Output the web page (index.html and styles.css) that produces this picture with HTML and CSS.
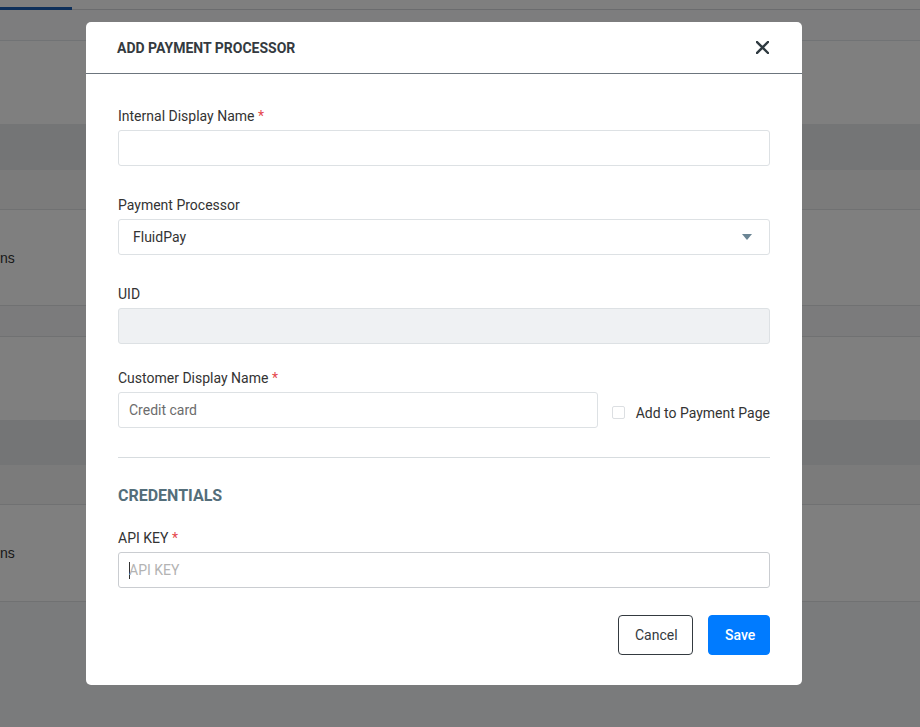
FILE: index.html
```html
<!DOCTYPE html>
<html lang="en">
<head>
<meta charset="utf-8">
<title>Add Payment Processor</title>
<link rel="stylesheet" href="styles.css">
</head>
<body>
<div class="page">
  <div class="topbar"><div class="tab-active"></div></div>
  <div class="subbar"></div>
  <div class="intro"></div>
  <div class="thead"></div>
  <div class="tfilter"></div>
  <div class="trow"><span class="cell-text">ns</span></div>
  <div class="tfoot"></div>
  <div class="gap-block"></div>
  <div class="thead thead-2"></div>
  <div class="tfilter"></div>
  <div class="trow trow-2"><span class="cell-text">ns</span></div>
  <div class="rest"></div>
</div>

<div class="backdrop">
  <div class="modal">
    <div class="modal-header">
      <h5 class="modal-title">ADD PAYMENT PROCESSOR</h5>
      <button class="close" type="button" aria-label="Close">
        <svg width="13" height="13" viewBox="0 0 13 13"><path d="M1 1 L12 12 M12 1 L1 12" stroke="#2f3a40" stroke-width="2.4" stroke-linecap="square" fill="none"/></svg>
      </button>
    </div>
    <div class="modal-body">
      <div class="group">
        <label class="label">Internal Display Name <span class="req">*</span></label>
        <div class="input"></div>
      </div>
      <div class="group">
        <label class="label">Payment Processor</label>
        <div class="input select"><span class="value">FluidPay</span><span class="caret"></span></div>
      </div>
      <div class="group group-tight">
        <label class="label">UID</label>
        <div class="input disabled"></div>
      </div>
      <div class="group">
        <label class="label">Customer Display Name <span class="req">*</span></label>
        <div class="row">
          <div class="input grow"><span class="muted">Credit card</span></div>
          <label class="check"><span class="box"></span><span>Add to Payment Page</span></label>
        </div>
      </div>
      <hr class="divider">
      <h6 class="section-title">CREDENTIALS</h6>
      <div class="group group-last">
        <label class="label">API KEY <span class="req">*</span></label>
        <div class="input focus"><span class="text-caret"></span><span class="placeholder">API KEY</span></div>
      </div>
      <div class="actions">
        <button class="btn btn-outline" type="button">Cancel</button>
        <button class="btn btn-primary" type="button">Save</button>
      </div>
    </div>
  </div>
</div>
</body>
</html>
```
FILE: styles.css
```css
* { box-sizing: border-box; }
html, body { margin: 0; padding: 0; }
body {
  font-family: Roboto, "Liberation Sans", Arial, sans-serif;
  font-size: 14px;
  color: #333;
  background: #fff;
  width: 920px;
  height: 727px;
  overflow: hidden;
}

/* underlying page */
.page { width: 920px; }
.topbar { height: 10px; border-bottom: 1px solid #d6d8dc; position: relative; background: #fff; }
.tab-active { position: absolute; left: 0; bottom: -1px; width: 72px; height: 3px; background: #1a5fb4; }
.subbar { height: 31px; background: #fafbfd; border-bottom: 1px solid #e3e6ea; }
.intro { height: 83px; background: #fff; }
.thead { height: 46px; background: #e8eaed; }
.thead-2 { height: 45px; }
.tfilter { height: 40px; background: #f6f6f6; border-bottom: 1px solid #e0e2e5; }
.trow { height: 96px; background: #fff; border-bottom: 1px solid #e0e2e5; display: flex; align-items: center; }
.trow-2 { height: 97px; }
.cell-text { font-family: "Liberation Sans", Arial, sans-serif; font-size: 14px; color: #333; }
.tfoot { height: 31px; background: #f6f7f9; border-bottom: 1px solid #e0e2e5; }
.gap-block { height: 83px; background: #fff; }
.rest { height: 130px; background: #f5f6f8; }

/* overlay */
.backdrop {
  position: fixed;
  inset: 0;
  background: rgba(0, 0, 0, 0.5);
  display: flex;
  align-items: flex-start;
}
.modal {
  margin: 22px 0 0 86px;
  width: 716px;
  background: #fff;
  border-radius: 5px;
}
.modal-header {
  height: 52px;
  display: flex;
  align-items: center;
  justify-content: space-between;
  padding: 0 33px 0 31px;
  border-bottom: 1px solid #6c757d;
}
.modal-title {
  margin: 0;
  font-size: 14px;
  font-weight: 700;
  color: #343a40;
}
.close {
  border: 0;
  background: none;
  padding: 0;
  width: 13px;
  height: 13px;
  display: block;
  cursor: pointer;
}
.close svg { display: block; }

.modal-body { padding: 32px 32px 30px; }
.group { margin-bottom: 29px; }
.group-tight { margin-bottom: 24px; }
.group-last { margin-bottom: 27px; }
.label {
  display: block;
  line-height: 20px;
  margin-bottom: 4px;
  color: #333;
}
.req { color: #e5484d; }
.input {
  height: 36px;
  border: 1px solid #dde1e4;
  border-radius: 3px;
  background: #fff;
  display: flex;
  align-items: center;
  padding: 0 10px;
  position: relative;
}
.select { padding: 0 14px; justify-content: space-between; }
.value { color: #333; }
.caret {
  width: 0; height: 0;
  border-left: 5.5px solid transparent;
  border-right: 5.5px solid transparent;
  border-top: 6px solid #6b8594;
  margin-right: 3px;
}
.disabled { background: #eff1f3; }
.row { display: flex; align-items: center; gap: 14px; }
.grow { flex: 1; }
.muted { color: #6c6c6c; }
.check { display: flex; align-items: center; gap: 11px; color: #333; padding-top: 5px; }
.box {
  width: 13px; height: 13px;
  border: 1px solid #dcdfe2;
  border-radius: 2px;
  background: #fff;
}
.divider {
  margin: 29px 0 0;
  border: 0;
  border-top: 1px solid #d7dcdf;
}
.section-title {
  margin: 28px 0 22px;
  font-size: 16px;
  line-height: 20px;
  font-weight: 700;
  color: #546e7a;
}
.focus { border-color: #cacdd1; }
.text-caret { width: 1px; height: 17px; background: #333; margin-right: -1px; }
.placeholder { color: #b3b3b3; }

.actions { display: flex; justify-content: flex-end; gap: 15px; }
.btn {
  height: 40px;
  border-radius: 4px;
  font-family: Roboto, "Liberation Sans", Arial, sans-serif;
  font-size: 14px;
  padding: 0 16px;
  cursor: pointer;
}
.btn-outline { background: #fff; border: 1px solid #343a40; color: #343a40; width: 75px; }
.btn-primary { background: #007bff; border: 1px solid #007bff; color: #fff; font-weight: 500; width: 62px; }
```
